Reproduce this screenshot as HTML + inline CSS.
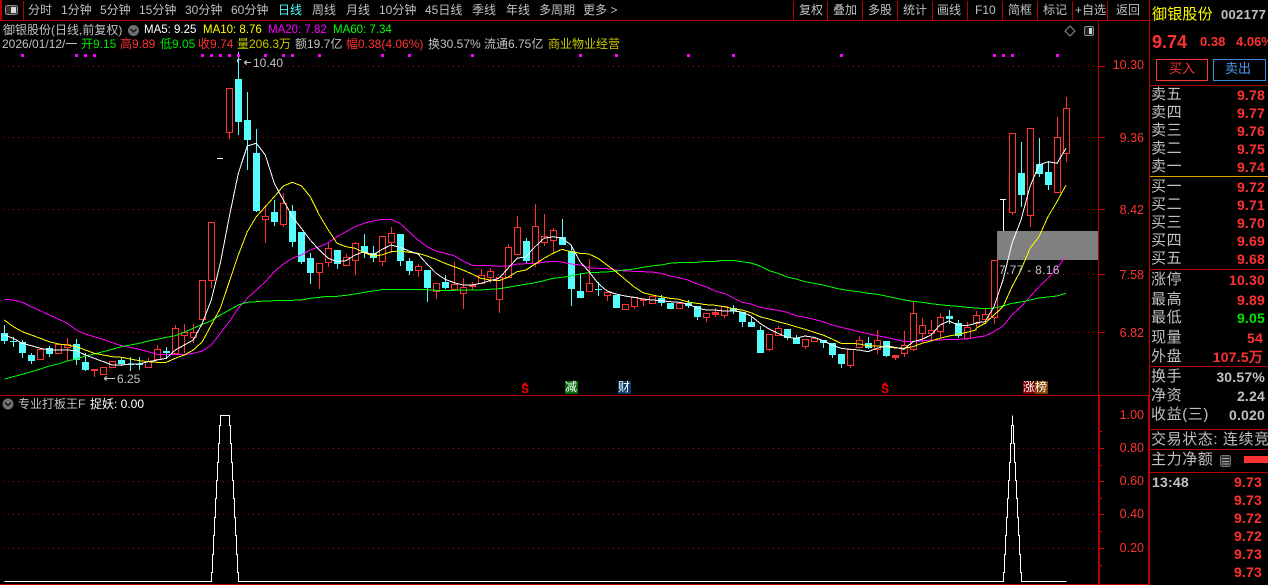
<!DOCTYPE html>
<html><head><meta charset="utf-8"><style>
html,body{margin:0;padding:0;background:#000;width:1268px;height:585px;overflow:hidden}
body{position:relative;font-family:"Liberation Sans","WenQuanYi Zen Hei",sans-serif;font-size:12px;color:#c0c0c0}
svg{position:absolute;left:0;top:0}
span{position:absolute;white-space:nowrap;line-height:14px;height:14px}
.r{color:#ff3232}.g{color:#00e600}.y{color:#c8c800}.w{color:#fff}.c{color:#54fcfc}.m{color:#ff00ff}.yy{color:#ffff00}.gg{color:#00ff00}
.ma{font-size:11.5px}
.ax{color:#ff3232;font-size:12.5px;width:40px;left:1104px;text-align:right}
.l{font-size:15px;left:1151px;letter-spacing:.6px;line-height:18px;height:18px}
.p{font-size:14px;font-weight:bold;color:#ff3232;right:3px;letter-spacing:.2px}
</style></head><body>
<svg id="s" width="1268" height="585" viewBox="0 0 1268 585" shape-rendering="crispEdges"></svg>

<span style="left:28px;top:3px">分时</span><span style="left:61px;top:3px">1分钟</span><span style="left:100px;top:3px">5分钟</span><span style="left:139px;top:3px">15分钟</span><span style="left:185px;top:3px">30分钟</span><span style="left:231px;top:3px">60分钟</span><span class="c" style="left:278px;top:3px">日线</span><span style="left:312px;top:3px">周线</span><span style="left:346px;top:3px">月线</span><span style="left:379px;top:3px">10分钟</span><span style="left:425px;top:3px">45日线</span><span style="left:472px;top:3px">季线</span><span style="left:506px;top:3px">年线</span><span style="left:539px;top:3px">多周期</span><span style="left:583px;top:3px">更多 &gt;</span>
<span style="left:799px;top:3px">复权</span><span style="left:833px;top:3px">叠加</span><span style="left:868px;top:3px">多股</span><span style="left:903px;top:3px">统计</span><span style="left:937px;top:3px">画线</span><span style="left:975px;top:3px">F10</span><span style="left:1008px;top:3px">简框</span><span style="left:1043px;top:3px">标记</span><span style="left:1075px;top:3px">+自选</span><span style="left:1116px;top:3px">返回</span>

<span style="left:3px;top:23px">御银股份(日线,前复权)</span>
<span class="w ma" style="left:144px;top:23px">MA5: 9.25</span><span class="yy ma" style="left:203px;top:23px">MA10: 8.76</span><span class="m ma" style="left:268px;top:23px">MA20: 7.82</span><span class="gg ma" style="left:333px;top:23px">MA60: 7.34</span>

<span style="left:2px;top:37px">2026/01/12/一</span><span class="g" style="left:81px;top:37px">开9.15</span><span class="r" style="left:120px;top:37px">高9.89</span><span class="g" style="left:160px;top:37px">低9.05</span><span class="r" style="left:198px;top:37px">收9.74</span><span class="y" style="left:237px;top:37px">量206.3万</span><span style="left:295px;top:37px">额19.7亿</span><span class="r" style="left:346px;top:37px">幅0.38(4.06%)</span><span style="left:428px;top:37px">换30.57%</span><span style="left:484px;top:37px">流通6.75亿</span><span class="y" style="left:548px;top:37px">商业物业经营</span>

<span style="left:253px;top:56px">10.40</span><span style="left:117px;top:372px">6.25</span><span style="left:999px;top:263px;letter-spacing:.3px">7.77 - 8.16</span>

<span class="ax" style="top:58px">10.30</span><span class="ax" style="top:131px">9.36</span><span class="ax" style="top:203px">8.42</span><span class="ax" style="top:268px">7.58</span><span class="ax" style="top:326px">6.82</span>
<span class="ax" style="top:408px">1.00</span><span class="ax" style="top:441px">0.80</span><span class="ax" style="top:474px">0.60</span><span class="ax" style="top:507px">0.40</span><span class="ax" style="top:541px">0.20</span>

<span style="left:18px;top:397px">专业打板王F</span><span class="w" style="left:90px;top:397px">捉妖: 0.00</span>

<span style="left:565px;top:381px;width:13px;height:13px;background:#0a6a0a;color:#fff;font-size:12px;line-height:13px">减</span>
<span style="left:618px;top:381px;width:13px;height:13px;background:#0a3a6a;color:#fff;font-size:12px;line-height:13px">财</span>
<span style="left:1023px;top:381px;width:12px;height:13px;background:#800000;color:#fff;font-size:12px;line-height:13px">涨</span>
<span style="left:1035px;top:381px;width:13px;height:13px;background:#804000;color:#fff;font-size:12px;line-height:13px">榜</span>
<span style="left:521px;top:381px;color:#ff0000;font-size:12px;font-weight:bold;line-height:16px;height:16px">S</span>
<span style="left:881px;top:381px;color:#ff0000;font-size:12px;font-weight:bold;line-height:16px;height:16px">S</span>

<span style="left:1152px;top:6px;font-size:15px;letter-spacing:.2px;color:#ffff00;line-height:18px;height:18px">御银股份</span>
<span style="left:1221px;top:8px;font-size:13px;font-weight:bold;letter-spacing:.3px;color:#c0c0c0">002177</span>
<span style="left:1152px;top:33px;font-size:18px;font-weight:bold;color:#ff3232;line-height:18px;height:18px">9.74</span>
<span class="r" style="left:1200px;top:35px;font-size:13px;font-weight:bold">0.38</span>
<span class="r" style="left:1236px;top:35px;font-size:13px;font-weight:bold">4.06%</span>
<span class="r" style="left:1169px;top:62px;font-size:13px">买入</span>
<span style="left:1225px;top:62px;font-size:13px;color:#4a9be8">卖出</span>

<span class="l" style="top:86px">卖五</span><span class="l" style="top:104px">卖四</span><span class="l" style="top:122px">卖三</span><span class="l" style="top:140px">卖二</span><span class="l" style="top:158px">卖一</span>
<span class="l" style="top:178px">买一</span><span class="l" style="top:196px">买二</span><span class="l" style="top:214px">买三</span><span class="l" style="top:232px">买四</span><span class="l" style="top:250px">买五</span>
<span class="l" style="top:271px">涨停</span><span class="l" style="top:291px">最高</span><span class="l" style="top:309px">最低</span><span class="l" style="top:329px">现量</span><span class="l" style="top:348px">外盘</span>
<span class="l" style="top:368px">换手</span><span class="l" style="top:387px">净资</span><span class="l" style="top:406px">收益(三)</span>
<span class="l" style="top:431px">交易状态: 连续竞</span><span class="l" style="top:451px">主力净额</span>

<span class="p" style="top:88px">9.78</span><span class="p" style="top:106px">9.77</span><span class="p" style="top:124px">9.76</span><span class="p" style="top:142px">9.75</span><span class="p" style="top:160px">9.74</span>
<span class="p" style="top:180px">9.72</span><span class="p" style="top:198px">9.71</span><span class="p" style="top:216px">9.70</span><span class="p" style="top:234px">9.69</span><span class="p" style="top:252px">9.68</span>
<span class="p" style="top:273px">10.30</span><span class="p" style="top:293px">9.89</span><span class="p" style="top:311px;color:#00e600">9.05</span><span class="p" style="top:331px;right:5px">54</span>
<span class="p" style="top:350px;right:5px">107.5万</span>
<span class="p" style="top:370px;color:#c0c0c0">30.57%</span><span class="p" style="top:389px;color:#c0c0c0">2.24</span><span class="p" style="top:408px;color:#c0c0c0">0.020</span>
<span class="p" style="top:475px;left:1152px;right:auto;color:#c0c0c0">13:48</span>
<span class="p" style="top:475px;right:6px">9.73</span><span class="p" style="top:493px;right:6px">9.73</span><span class="p" style="top:511px;right:6px">9.72</span><span class="p" style="top:529px;right:6px">9.72</span><span class="p" style="top:547px;right:6px">9.73</span><span class="p" style="top:565px;right:6px">9.73</span>

<script>
var S='';
function R(x,y,w,h,c){S+='<rect x="'+x+'" y="'+y+'" width="'+w+'" height="'+h+'" fill="'+c+'"/>';}
var LN='#b40000',RED='#ff3232',CY='#54fcfc';
/* grid */
[66,137,209,274,332,448,481,514,548].forEach(function(y){
 S+='<line x1="3" x2="1098" y1="'+(y+.5)+'" y2="'+(y+.5)+'" stroke="#a00000" stroke-dasharray="1 4"/>';
 R(1098,y,y>400?6:7,1,'#e00000');
});
[431,465,498,531,565].forEach(function(y){R(1099,y,3,1,'#e00000');});
/* frame */
R(0,20,1149,1,LN);R(1098,21,1,374,LN);R(1149,0,1,396,LN);R(0,395,1149,1,LN);R(1098,396,2,189,LN);R(1148,396,2,189,LN);R(0,584,1149,1,LN);R(0,0,2,20,LN);R(23,1,1,19,LN);
[793,827,862,897,932,967,1002,1037,1072,1107].forEach(function(x){R(x,1,1,19,LN);});
[85,269,366,429,449,472].forEach(function(y){R(1150,y,118,1,LN);});
R(1150,176,118,1,'#e0a000');
/* candles */
var D=[['c',333,340,325,343],['c',341,341,337,346],['c',342,352,340,357],['c',355,360,353,363],['r',349,359],['c',348,353,346,356],['r',344,353],['r',344,347,338,360],['c',344,359,339,364],['c',362,369,353,370],['f',369,370,369,376],['r',367,374],['r',361,367],['c',360,363,358,365],['c',364,364,357,370],['c',364,364,357,369],['r',361,367,358],['r',349,359,345],['c',351,352,347,358],['r',328,353,325],['r',332,335,324,352],['r',332,337,324,342],['r',280,319],['r',222,280,222,287],0,['r',88,132,88,138],['c',79,121,52,134],['c',120,139,92,169],['c',153,210,129,211],['r',216,219,205,242],['c',212,221,200,225],['r',203,224,193,226],['c',211,241,205,246],['c',232,261,232,263],['c',258,272,253,283],['r',263,272,263,288],['r',248,262,242,266],['c',250,263,250,268],['r',257,265,254],['r',243,260,242,274],['c',246,252,234,257],['c',253,257,246,261],['r',236,261,236,265],['r',233,242,227,252],['c',234,260,234,265],['c',261,270,258,274],['r',266,270,264,276],['c',270,287,270,301],['r',283,291,283,298],['c',282,287,275,288],['r',284,289,262],['r',287,293,278,308],['f',285,286,282,289],['r',275,283,269],['r',271,277,268,282],['r',277,299,277,312],['r',247,277,244],['r',227,254,216],['c',241,260,238,262],['r',226,263,204,266],['r',236,242,214,245],['r',230,240,228,253],['c',237,244,219],['c',251,288,245,305],['c',291,297,273],['r',283,291,259],['c',289,289,282,295],['r',292,295,292,300],['c',295,307],['r',304,309],['r',297,306,297,308],['f',299,300,299,305],['r',296,303],['c',298,302,295,305],['c',303,308],['r',303,308],['c',303,305,300,307],['c',306,316,306,319],['r',313,317,313,321],['f',312,314,308,316],['r',306,315,306,317],['c',308,310,305,313],['c',312,321,312,326],['c',322,326,317],['c',330,352,326],['r',334,349,334,350],['r',328,335,326],['c',329,337,329,339],['c',338,343,335],['r',339,346,339,348],['r',338,341],['c',340,342,340,347],['c',343,354,343,357],['c',354,363,354,367],['r',349,365,349,367],['r',340,347,336],['c',343,347,337,348],['r',340,349,330,353],['c',341,355,341,356],['f',355,357,355,359],['r',345,353,331,356],['r',313,349,301,350],['r',325,333,318,341],['r',330,333,320,340],['r',317,331,313,337],['c',316,318,310,323],['c',323,335,320,337],['r',327,338,322],['r',315,323,311,326],['r',314,319,309,323],['r',260,317,260,323],0,['r',133,212,133,214],['c',173,194,142,206],['r',128,215,128,226],['c',164,173,138,176],['c',172,184,161,189],['r',137,192,117],['r',108,153,97,161]];
D.forEach(function(d,i){
 if(!d)return;
 var x=4+9*i,t=d[0],col=t=='c'?CY:RED,hi=d[3]||d[1],lo=d[4]||d[2];
 R(x,hi,1,lo-hi+1,col);
 if(t=='c'||t=='f'){R(x-3,d[1],7,d[2]-d[1]+1,col);}
 else{S+='<rect x="'+(x-2.5)+'" y="'+(d[1]+.5)+'" width="6" height="'+(d[2]-d[1])+'" fill="#000" stroke="'+RED+'"/>';}
});
/* limit-up marks */
R(217,158,6,1,'#fff');R(1000,199,6,1,'#fff');R(1003,199,1,32,'#fff');
/* gray box */
R(997,231,101,29,'#808080');
/* MA */
function L(c){var p=[];for(var k=1;k<arguments.length;k++){var a=arguments[k];a[2].split(' ').forEach(function(q){var v=q.split(',');p.push((a[0]+v[0]/3).toFixed(1)+','+(a[1]+v[1]/3).toFixed(1));});}
 S+='<polyline points="'+p.join(' ')+'" fill="none" stroke="'+c+'" stroke-width="1"/>';}
L('#ff00ff',[0,60,'13,718 40,720 67,727 94,740 121,752 148,765 175,777 202,790 229,810 256,822 283,830 310,838 337,848 364,857 391,862 418,868 445,875 472,883 499,884 526,884 553,884 580,880 607,873 634,855 661,820 688,785 715,745 742,715 769,690 796,665 823,635 850,612 877,595 904,585 931,570 958,560 985,548'],[330,190,'21,140 48,125 75,110 102,100 129,93 156,88 183,88 210,100 237,125 264,150 291,170 318,183 345,190 372,197 399,213 426,226 453,227 480,227 507,229 534,228 561,222 588,221 615,220 642,217 669,214 696,216 723,222 750,225 777,233 804,235 831,236 858,240 885,243 912,244 939,245 966,246'],[660,230,'3,130 30,138 57,143 84,150 111,162 138,170 165,183 192,190 219,203 246,217 273,222 300,232 327,237 354,241 381,247 408,257 435,262 462,268 489,275 516,285 543,292 570,298 597,305 624,311 651,317 678,322 705,328 732,334 759,334 786,333 813,330 840,330 867,328 894,328 921,327 948,322'],[950,80,'78,772 105,768 132,755 159,738 186,705 213,680 240,650 267,620 294,595 321,565 345,533']);
L('#00ff00',[0,60,'13,958 40,950 67,943 94,935 121,927 148,918 175,912 202,903 229,897 256,888 283,882 310,875 337,868 364,860 391,855 418,850 445,843 472,838 499,832 526,827 553,817 580,805 607,793 634,782 661,765 688,750 715,735 742,727 769,725 796,723 823,722 850,722 877,721 904,720 931,715 958,712 985,709'],[330,190,'21,319 48,316 75,312 102,307 129,303 156,299 183,298 210,298 237,298 264,298 291,299 318,301 345,302 372,301 399,300 426,300 453,300 480,298 507,296 534,292 561,287 588,283 615,278 642,272 669,265 696,262 723,258 750,252 777,248 804,247 831,246 858,243 885,240 912,237 939,232 966,228'],[660,230,'3,105 30,100 57,98 84,97 111,97 138,94 165,94 192,91 219,91 246,95 273,99 300,108 327,122 354,130 381,141 408,147 435,155 462,160 489,165 516,172 543,178 570,182 597,185 624,190 651,193 678,198 705,204 732,210 759,214 786,217 813,221 840,224 867,227 894,229 921,232 948,234'],[950,80,'78,684 105,686 132,684 159,678 186,670 213,666 240,660 267,654 294,651 321,648 348,640']);
L('#ffff00',[0,60,'13,780 40,800 67,815 94,825 121,835 148,845 175,852 202,855 229,860 256,870 283,880 310,885 337,890 364,892 391,897 418,902 445,905 472,907 499,907 526,895 553,885 580,870 607,845 634,795 661,745 688,665 715,585 742,515 769,470 796,440 823,410 850,378 877,367 904,377 931,410 958,465 985,510'],[330,190,'21,160 48,170 75,175 102,188 129,198 156,195 183,185 210,183 237,187 264,190 291,198 318,208 345,220 372,230 399,240 426,252 453,265 480,270 507,272 534,262 561,245 588,240 615,222 642,205 669,190 696,178 723,185 750,190 777,192 804,205 831,225 858,245 885,268 912,290 939,308 966,315'],[660,230,'3,200 30,205 57,208 84,216 111,220 138,224 165,226 192,230 219,236 246,240 273,248 300,260 327,267 354,275 381,282 408,290 435,298 462,307 489,315 516,327 543,340 570,340 597,342 624,347 651,348 678,350 705,354 732,355 759,350 786,340 813,333 840,325 867,318 894,313 921,307 948,300'],[950,80,'78,745 105,730 132,705 159,680 186,620 213,570 240,505 267,470 294,410 321,365 348,315']);
L('#ffffff',[0,60,'13,825 40,835 67,850 94,857 121,865 148,870 175,870 202,870 229,872 256,885 283,895 310,905 337,915 364,915 391,912 418,912 445,905 472,900 499,895 526,870 553,855 580,840 607,790 634,720 661,610 688,470 715,340 742,258 769,250 796,285 823,370 850,420 877,470 904,505 931,540 958,570 985,595'],[330,190,'21,215 48,212 75,195 102,185 129,195 156,178 183,165 210,172 237,183 264,192 291,222 318,250 345,268 372,278 399,285 426,285 453,280 480,272 507,265 534,235 561,205 588,200 615,170 642,145 669,140 696,145 723,165 750,215 777,245 804,280 831,303 858,312 885,318 912,322 939,327 966,330'],[660,230,'3,212 30,215 57,217 84,222 111,234 138,240 165,240 192,243 219,243 246,246 273,258 300,280 327,297 354,310 381,322 408,325 435,318 462,322 489,332 516,345 543,355 570,358 597,360 624,365 651,355 678,348 705,352 732,358 759,335 786,328 813,315 840,285 867,273 894,285 921,287 948,280'],[950,80,'78,728 105,725 132,680 159,600 186,490 213,420 240,320 267,255 294,245 321,250 348,205']);
/* dots */
[22,76,85,94,202,211,220,229,238,265,283,292,319,382,409,472,580,616,688,733,841,994,1003,1012,1057].forEach(function(x){R(x-1,54,3,3,'#ff00ff');});
/* lower spikes */
function spike(x0){var ys=[581,572,554,535,517,498,480,462,443,425,415],p=[],i;
 for(i=0;i<10;i++){p.push((x0+i+.5)+','+(ys[i]+.5));p.push((x0+i+.5)+','+(ys[i+1]+.5));}
 return p;}
function spikeR(x0){var ys=[415,425,443,462,480,498,517,535,554,572,581],p=[],i;
 for(i=0;i<10;i++){p.push((x0+i+.5)+','+(ys[i]+.5));p.push((x0+i+.5)+','+(ys[i+1]+.5));}
 return p;}
var pts=['4.5,581.5'].concat(spike(211),spikeR(229),spike(1003),spikeR(1012),['1066.5,581.5']);
S+='<polyline points="'+pts.join(' ')+'" fill="none" stroke="#fff"/>';
/* arrows */
S+='<path d="M237.5 59.5h4M237.5 59.5v3M244 62.5h7M244 62.5l3-2M244 62.5l3 2" stroke="#c0c0c0" fill="none"/>';
S+='<path d="M104 378.5h11M104 378.5l3-2M104 378.5l3 2" stroke="#c0c0c0" fill="none"/>';
/* panel icons */
S+='<rect x="5.5" y="5.5" width="12" height="9" rx="2" fill="#333" stroke="#8c8c8c"/><rect x="11" y="7" width="5" height="6" fill="#d8d8d8"/>';
S+='<rect x="1084.5" y="26.5" width="9" height="9" rx="1.5" fill="#222" stroke="#8c8c8c"/><rect x="1089" y="28" width="3" height="6" fill="#d8d8d8"/>';
S+='<path d="M1070 26l5 5-5 5-5-5z" fill="none" stroke="#8c8c8c" shape-rendering="auto"/>';
S+='<circle cx="133.5" cy="30.5" r="5.5" fill="#707070" shape-rendering="auto"/><path d="M130.5 29l3 3 3-3" fill="none" stroke="#111" stroke-width="1.3" shape-rendering="auto"/>';
S+='<circle cx="8" cy="404" r="5.5" fill="#707070" shape-rendering="auto"/><path d="M5 402.5l3 3 3-3" fill="none" stroke="#111" stroke-width="1.3" shape-rendering="auto"/>';
/* s triangles */
S+='<path d="M525 382l2.5 3h-5zM885 382l2.5 3h-5z" fill="#ff0000"/>';
/* buttons */
S+='<rect x="1156.5" y="59.5" width="51" height="21" fill="none" stroke="#ff3232"/><rect x="1213.5" y="59.5" width="52" height="21" fill="none" stroke="#3b8bd8"/>';
/* net icon, bar */
S+='<rect x="1220.5" y="455.5" width="10" height="11" rx="2" fill="#333" stroke="#777"/><path d="M1222 458.5h7M1222 461.5h7M1222 464h7" stroke="#aaa"/>';
R(1244,456,24,7,'#ff3232');
document.getElementById('s').innerHTML=S;
</script>
</body></html>
